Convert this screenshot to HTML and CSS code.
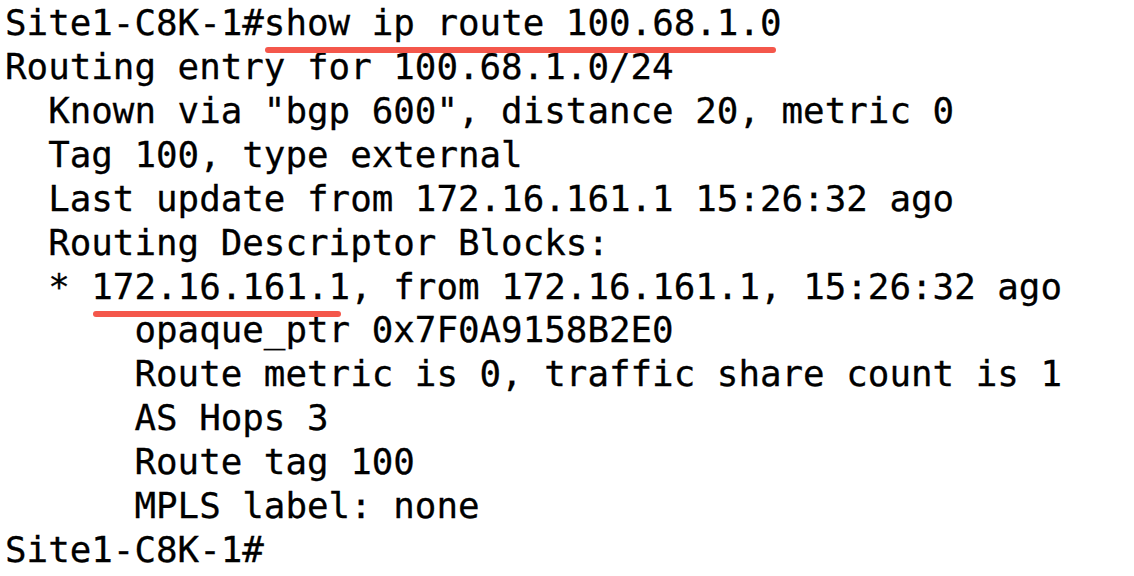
FILE: index.html
```html
<!DOCTYPE html>
<html>
<head>
<meta charset="utf-8">
<link rel="stylesheet" href="styles.css">
</head>
<body>
<pre class="term">Site1-C8K-1#<span class="mark mark-cmd">show ip route 100.68.1.0</span>
Routing entry for 100.68.1.0/24
  Known via "bgp 600", distance 20, metric 0
  Tag 100, type external
  Last update from 172.16.161.1 15:26:32 ago
  Routing Descriptor Blocks:
  * <span class="mark mark-ip">172.16.161.1</span>, from 172.16.161.1, 15:26:32 ago
      opaque_ptr 0x7F0A9158B2E0
      Route metric is 0, traffic share count is 1
      AS Hops 3
      Route tag 100
      MPLS label: none
Site1-C8K-1#</pre>
</body>
</html>
```
FILE: styles.css
```css
html, body {
  margin: 0;
  padding: 0;
  background: #ffffff;
}
.term {
  margin: 0;
  padding: 1px 0 0 5px;
  font-family: "DejaVu Sans Mono", monospace;
  font-size: 35.85px;
  line-height: 43.92px;
  color: #000000;
  white-space: pre;
  -webkit-text-stroke: 0.3px #000000;
}
.mark {
  position: relative;
}
.mark::after {
  content: "";
  position: absolute;
  top: 45px;
  height: 6px;
  background: #f4574b;
  border-radius: 3px;
}
.mark-cmd::after {
  left: 1px;
  right: 6px;
}
.mark-ip::after {
  left: 2px;
  right: 9px;
}
```
